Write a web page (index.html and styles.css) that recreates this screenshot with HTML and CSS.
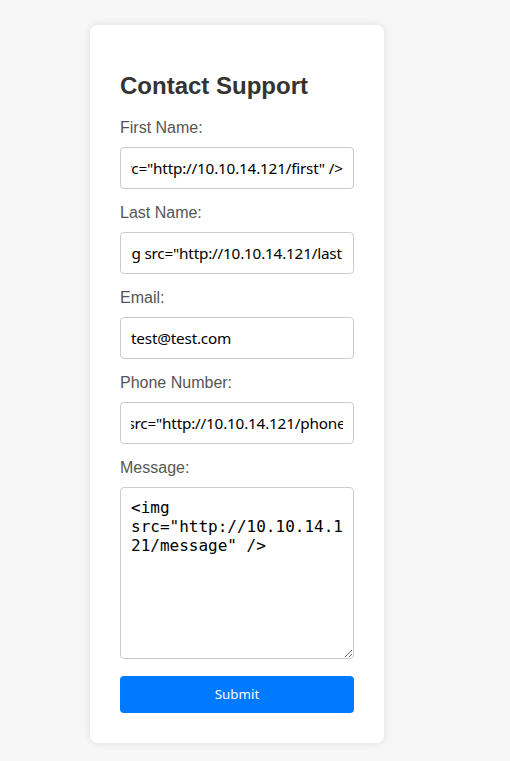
FILE: index.html
```html
<!DOCTYPE html>
<html lang="en">
<head>
<meta charset="utf-8">
<title>Contact Support</title>
<link rel="stylesheet" href="styles.css">
</head>
<body>
<div class="card">
  <h2 class="title">Contact Support</h2>
  <form class="form">
    <label class="label" for="first">First Name:</label>
    <input class="field" id="first" type="text" value='&lt;img src="http://10.10.14.121/first" /&gt;' data-scroll-end="1">
    <label class="label" for="last">Last Name:</label>
    <input class="field" id="last" type="text" value='&lt;img src="http://10.10.14.121/last" /&gt;' data-prefix="&lt;im" data-extra="0">
    <label class="label" for="email">Email:</label>
    <input class="field" id="email" type="email" value="test@test.com">
    <label class="label" for="phone">Phone Number:</label>
    <input class="field" id="phone" type="text" value='&lt;img src="http://10.10.14.121/phone" /&gt;' data-prefix="&lt;img " data-extra="4">
    <label class="label" for="message">Message:</label>
    <textarea class="area" id="message">&lt;img src="http://10.10.14.121/message" /&gt;</textarea>
    <button class="submit" type="button">Submit</button>
  </form>
</div>
<script src="script.js"></script>
</body>
</html>
```
FILE: styles.css
```css
html, body {
  margin: 0;
  padding: 0;
}
body {
  background: #f7f7f7;
  font-family: "Liberation Sans", Arial, sans-serif;
  padding: 25px 0 18px 90px;
}
.card {
  width: 294px;
  box-sizing: border-box;
  background: #fff;
  border-radius: 8px;
  box-shadow: 0 0 10px rgba(0, 0, 0, 0.1);
  padding: 30px;
}
.title {
  font-size: 24px;
  font-weight: bold;
  color: #333;
  margin: 17px 0 19px;
}
.form {
  display: flex;
  flex-direction: column;
}
.label {
  display: block;
  font-size: 16px;
  color: #555;
  margin-bottom: 10px;
}
.field {
  display: block;
  width: 100%;
  box-sizing: border-box;
  height: 42px;
  padding: 10px;
  border: 1px solid #ccc;
  border-radius: 4px;
  font-family: "Noto Sans", sans-serif;
  font-size: 15.3px;
  letter-spacing: -0.2px;
  line-height: 20px;
  color: #000;
  background: #fff;
  margin: 0 0 15px;
  outline: none;
}
.area {
  display: block;
  width: 100%;
  box-sizing: border-box;
  height: 172px;
  padding: 10px;
  border: 1px solid #ccc;
  border-radius: 4px;
  font-family: "DejaVu Sans Mono", monospace;
  font-size: 16px;
  color: #000;
  background: #fff;
  margin: 0 0 17px;
  outline: none;
}
.submit {
  display: block;
  width: 100%;
  height: 37px;
  box-sizing: border-box;
  padding: 10px;
  border: none;
  border-radius: 4px;
  background: #007bff;
  color: #fff;
  font-family: "Noto Sans", sans-serif;
  font-size: 13.33px;
  line-height: 17px;
  cursor: pointer;
}
```
FILE: script.js
```js
(function () {
  var canvas = document.createElement('canvas');
  var ctx = canvas.getContext('2d');
  document.querySelectorAll('.field').forEach(function (el) {
    if (el.dataset.scrollEnd) {
      el.scrollLeft = 99999;
    } else if (el.dataset.prefix) {
      var cs = getComputedStyle(el);
      ctx.font = cs.fontSize + ' ' + cs.fontFamily;
      var ls = parseFloat(cs.letterSpacing) || 0;
      var prefix = el.dataset.prefix;
      var w = ctx.measureText(prefix).width + ls * prefix.length + Number(el.dataset.extra || 0);
      el.scrollLeft = Math.round(w);
    }
  });
})();
```
